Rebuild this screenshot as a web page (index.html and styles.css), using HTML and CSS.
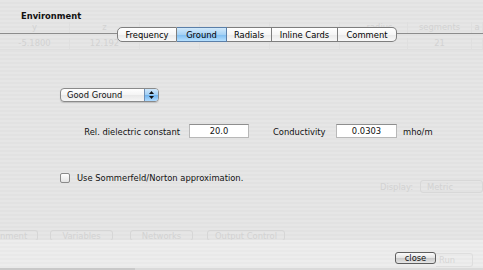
FILE: index.html
```html
<html><head>
<meta charset="UTF-8">
<title>Environment</title>
<link rel="stylesheet" href="styles.css">
</head>
<body>
    <!-- faded window behind the sheet -->
    <div class="ghost">
        <div class="ghost-table">
            <div class="gt-row">
                <span>y</span><span>z</span><span></span><span></span><span></span><span class="gt-radius">radius</span><span>segments</span><span>a</span>
            </div>
            <div class="gt-row">
                <span>-5.1800</span><span>12.192</span><span></span><span></span><span></span><span></span><span>21</span><span></span>
            </div>
        </div>
        <div class="ghost-display">
            <span>Display:</span>
            <span class="ghost-box">Metric</span>
        </div>
        <div class="ghost-buttons">
            <span class="ghost-btn btn-env">nment</span>
            <span class="ghost-btn btn-var">Variables</span>
            <span class="ghost-btn btn-net">Networks</span>
            <span class="ghost-btn btn-out">Output Control</span>
        </div>
    </div>

    <div class="sheet">
        <div class="title">Environment</div>

        <div class="tabview">
            <div class="tabs">
                <div class="tab t-freq">Frequency</div>
                <div class="tab t-ground selected">Ground</div>
                <div class="tab t-rad">Radials</div>
                <div class="tab t-inline">Inline Cards</div>
                <div class="tab t-comment">Comment</div>
            </div>

            <div class="pane">
                <div class="popup">
                    <span class="popup-label">Good Ground</span>
                    <span class="popup-arrows">
                        <svg width="9" height="12" viewBox="0 0 9 12">
                            <path d="M4.5 2 L7 5 L2 5 Z" fill="#111"/>
                            <path d="M4.5 10 L7 7 L2 7 Z" fill="#111"/>
                        </svg>
                    </span>
                </div>

                <div class="fields">
                    <label class="lbl lbl-diel">Rel. dielectric constant</label>
                    <div class="field f-diel">20.0</div>
                    <label class="lbl lbl-cond">Conductivity</label>
                    <div class="field f-cond">0.0303</div>
                    <span class="unit">mho/m</span>
                </div>

                <div class="check-row">
                    <span class="checkbox"></span>
                    <span>Use Sommerfeld/Norton approximation.</span>
                </div>
            </div>
        </div>

        <div class="footer">
            <button class="close-btn">close</button>
            <span class="ghost-run">Run</span>
        </div>
    </div>
</body></html>
```

FILE: styles.css
```css
* {
    margin: 0;
    padding: 0;
    box-sizing: border-box;
}

body {
    width: 483px;
    height: 270px;
    overflow: hidden;
    position: relative;
    font-family: "DejaVu Sans Condensed", "DejaVu Sans", "Liberation Sans", sans-serif;
    font-stretch: condensed;
    font-size: 9.3px;
    line-height: 11px;
    color: #111;
    background: repeating-linear-gradient(180deg, #e6e6e6 0 2px, #e2e2e2 2px 4px);
}

/* faded background window */
.ghost {
    position: absolute;
    inset: 0;
    z-index: 0;
    color: #d2d2d2;
}

.ghost-table {
    margin-top: 22px;
}

.gt-row {
    display: grid;
    grid-template-columns: 70px 70px 60px 70px 70px 68px 64px 11px;
    height: 12px;
    line-height: 10px;
}

.gt-row + .gt-row {
    height: 14px;
    margin-top: 2px;
    border-bottom: 1px solid #dfdfdf;
    padding-top: 2px;
}

.gt-row span {
    text-align: center;
    border-right: 1px solid #dfdfdf;
}

.gt-radius {
    padding-left: 12px;
}

.ghost-display {
    display: flex;
    align-items: center;
    gap: 7px;
    margin-top: 130px;
    padding-left: 380px;
    height: 13px;
}

.ghost-box {
    width: 72px;
    height: 13px;
    padding-left: 6px;
    border: 1px solid #d8d8d8;
    border-radius: 3px;
    line-height: 11px;
}

.ghost-buttons {
    display: flex;
    margin-top: 37px;
    height: 11px;
}

.ghost-btn {
    height: 11px;
    border: 1px solid #d6d6d6;
    border-radius: 3px;
    text-align: center;
    line-height: 9px;
}

.btn-env { width: 38px; border-left: none; border-radius: 0 3px 3px 0; text-align: left; }
.btn-var { width: 63px; margin-left: 12px; }
.btn-net { width: 63px; margin-left: 17px; }
.btn-out { width: 78px; margin-left: 14px; }

/* sheet */
.sheet {
    position: relative;
    z-index: 1;
    height: 270px;
    display: flex;
    flex-direction: column;
}

.title {
    font-weight: bold;
    padding: 11px 0 0 21px;
    line-height: 10px;
}

.tabview {
    flex: 1;
    margin-top: 12px;
    border-top: 1px solid #8c8c8c;
}

.tabs {
    display: flex;
    margin: -7px 0 0 117px;
    height: 15px;
}

.tab {
    height: 15px;
    line-height: 13px;
    text-align: center;
    color: #000;
    border: 1px solid #7e7e7e;
    border-left: none;
    background: linear-gradient(180deg, #ffffff 0%, #f6f6f6 50%, #e9e9e9 51%, #f8f8f8 100%);
}

.tab:first-child {
    border-left: 1px solid #7e7e7e;
    border-radius: 5px 0 0 5px;
}

.tab:last-child {
    border-radius: 0 5px 5px 0;
}

.tab.selected {
    border-color: #5b7fa8;
    background: linear-gradient(180deg, #d2e9fb 0%, #a6d2f5 50%, #7cbcf0 51%, #b6e0ff 100%);
}

.t-freq { width: 60px; }
.t-ground { width: 50px; }
.t-rad { width: 45px; }
.t-inline { width: 66px; }
.t-comment { width: 59px; }

.pane {
    padding-left: 60px;
}

.popup {
    display: flex;
    width: 99px;
    height: 14px;
    margin-top: 46px;
    border: 1px solid #8a8a8a;
    border-radius: 4px;
    overflow: hidden;
    background: linear-gradient(180deg, #ffffff 0%, #f4f4f4 50%, #e8e8e8 51%, #f6f6f6 100%);
    box-shadow: 0 1px 1px rgba(0, 0, 0, 0.15);
}

.popup-label {
    flex: 1;
    padding-left: 6px;
    line-height: 12px;
}

.popup-arrows {
    width: 14px;
    display: flex;
    align-items: center;
    justify-content: center;
    border-left: 1px solid #6f8fb5;
    background: linear-gradient(180deg, #cfe7fb 0%, #9fcdf3 50%, #6fb3ee 51%, #b0dbff 100%);
}

.fields {
    display: flex;
    align-items: center;
    margin-top: 22px;
    height: 14px;
}

.lbl {
    text-align: right;
}

.lbl-diel { width: 120px; }
.lbl-cond { width: 54px; margin-left: 24px; text-align: left; }

.field {
    height: 14px;
    background: #fff;
    border: 1px solid #b8b8b8;
    border-top-color: #8e8e8e;
    text-align: center;
    line-height: 12px;
    margin-left: 9px;
}

.f-diel { width: 60px; }
.f-cond { width: 61px; }

.unit {
    margin-left: 6px;
}

.check-row {
    display: flex;
    align-items: center;
    gap: 7px;
    margin-top: 34px;
}

.checkbox {
    width: 10px;
    height: 10px;
    border: 1px solid #8a8a8a;
    border-radius: 2px;
    background: linear-gradient(180deg, #ffffff, #e4e4e4);
}

.footer {
    height: 30px;
    display: flex;
    align-items: flex-start;
    padding: 12px 0 0 395px;
    background: repeating-linear-gradient(180deg, #ededed 0 2px, #e9e9e9 2px 4px);
    border-bottom: 2px solid #dadada;
    position: relative;
}

.footer::after {
    content: "";
    position: absolute;
    left: 0;
    bottom: -2px;
    width: 135px;
    height: 2px;
    background: #c9c9c9;
}

.close-btn {
    width: 41px;
    height: 12px;
    font-family: inherit;
    font-stretch: condensed;
    font-size: 9.3px;
    line-height: 10px;
    color: #111;
    border: 1px solid #5e5e5e;
    border-radius: 3px;
    background: linear-gradient(180deg, #fbfbfb 0%, #e4e4e4 50%, #c9c9c9 51%, #e6e6e6 100%);
}

.ghost-run {
    width: 37px;
    height: 14px;
    margin-top: 1px;
    border: 1px solid #dedede;
    border-left: none;
    border-radius: 0 3px 3px 0;
    color: #d6d6d6;
    padding-left: 3px;
    line-height: 12px;
}
```
